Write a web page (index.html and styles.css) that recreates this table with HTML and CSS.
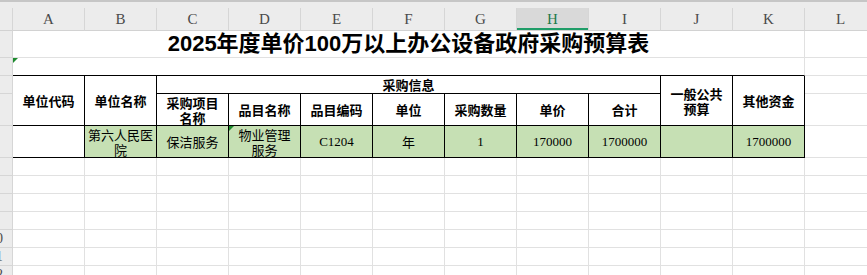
FILE: index.html
```html
<!DOCTYPE html>
<html lang="zh-CN">
<head>
    <meta charset="UTF-8">
    <meta name="viewport" content="width=device-width, initial-scale=1.0">
    <title>2025年度单价100万以上办公设备政府采购预算表</title>
    <link rel="stylesheet" href="styles.css">
</head>
<body>
    <!-- strip above the column letters -->
    <div class="top-strip"></div>

    <table class="sheet">
        <colgroup>
            <col class="col-rh">
            <col class="col"><col class="col"><col class="col"><col class="col">
            <col class="col"><col class="col"><col class="col"><col class="col">
            <col class="col"><col class="col"><col class="col"><col class="col">
        </colgroup>
        <thead>
            <tr class="col-head">
                <th class="corner"></th>
                <th>A</th><th>B</th><th>C</th><th>D</th><th>E</th><th>F</th>
                <th>G</th><th class="sel">H</th><th>I</th><th>J</th><th>K</th><th>L</th>
            </tr>
        </thead>
        <tbody>
            <tr class="r-title">
                <th class="rh"><span>1</span></th>
                <td colspan="11" class="title">2025年度单价100万以上办公设备政府采购预算表</td>
                <td></td>
            </tr>
            <tr class="r-sm">
                <th class="rh"><span>2</span></th>
                <td colspan="11" class="blank-top flagged"><i class="flag"></i></td>
                <td></td>
            </tr>
            <tr class="r-sm">
                <th class="rh"><span>3</span></th>
                <td rowspan="2" class="box hd">单位代码</td>
                <td rowspan="2" class="box hd">单位名称</td>
                <td colspan="7" class="box hd">采购信息</td>
                <td rowspan="2" class="box hd two">一般公共<br>预算</td>
                <td rowspan="2" class="box hd">其他资金</td>
                <td></td>
            </tr>
            <tr class="r-lg">
                <th class="rh"><span>4</span></th>
                <td class="box hd two">采购项目<br>名称</td>
                <td class="box hd">品目名称</td>
                <td class="box hd">品目编码</td>
                <td class="box hd">单位</td>
                <td class="box hd">采购数量</td>
                <td class="box hd">单价</td>
                <td class="box hd">合计</td>
                <td></td>
            </tr>
            <tr class="r-lg">
                <th class="rh"><span>5</span></th>
                <td class="box"></td>
                <td class="box fill two">第六人民医<br>院</td>
                <td class="box fill">保洁服务</td>
                <td class="box fill two flagged"><i class="flag"></i>物业管理<br>服务</td>
                <td class="box fill num">C1204</td>
                <td class="box fill">年</td>
                <td class="box fill num">1</td>
                <td class="box fill num">170000</td>
                <td class="box fill num">1700000</td>
                <td class="box fill"></td>
                <td class="box fill num">1700000</td>
                <td></td>
            </tr>
            <tr class="r-sm"><th class="rh"><span>6</span></th><td></td><td></td><td></td><td></td><td></td><td></td><td></td><td></td><td></td><td></td><td></td><td></td></tr>
            <tr class="r-sm"><th class="rh"><span>7</span></th><td></td><td></td><td></td><td></td><td></td><td></td><td></td><td></td><td></td><td></td><td></td><td></td></tr>
            <tr class="r-sm"><th class="rh"><span>8</span></th><td></td><td></td><td></td><td></td><td></td><td></td><td></td><td></td><td></td><td></td><td></td><td></td></tr>
            <tr class="r-sm"><th class="rh"><span>9</span></th><td></td><td></td><td></td><td></td><td></td><td></td><td></td><td></td><td></td><td></td><td></td><td></td></tr>
            <tr class="r-sm"><th class="rh"><span>10</span></th><td></td><td></td><td></td><td></td><td></td><td></td><td></td><td></td><td></td><td></td><td></td><td></td></tr>
            <tr class="r-sm"><th class="rh"><span>11</span></th><td></td><td></td><td></td><td></td><td></td><td></td><td></td><td></td><td></td><td></td><td></td><td></td></tr>
            <tr class="r-sm"><th class="rh"><span>12</span></th><td></td><td></td><td></td><td></td><td></td><td></td><td></td><td></td><td></td><td></td><td></td><td></td></tr>
        </tbody>
    </table>
</body>
</html>
```

FILE: styles.css
```css
/* Page */
body {
    margin: 0;
    background: #fff;
    color: #000;
    font-family: "Noto Sans CJK SC", "Noto Sans", sans-serif;
    overflow: hidden;
}

/* Grey band above the column letters */
.top-strip {
    height: 6px;
    background: #ececec;
    border-top: 2px solid #c6c6c6;
}

/* Sheet grid: every cell draws its own right and bottom line */
.sheet {
    border-collapse: separate;
    border-spacing: 0;
    table-layout: fixed;
    width: 877px;
}

.col-rh { width: 13px; }
.col { width: 72px; }

.sheet td,
.sheet th {
    padding: 0;
    border-right: 1px solid #e1e1e1;
    border-bottom: 1px solid #e1e1e1;
    box-sizing: border-box;
    overflow: hidden;
    white-space: nowrap;
    text-align: center;
    vertical-align: middle;
}

/* Column letters */
.col-head th {
    height: 23px;
    background: #ececec;
    border-right-color: #d6d6d6;
    border-bottom-color: #d2d2d2;
    font-family: "Liberation Serif", serif;
    font-weight: normal;
    font-size: 15px;
    color: #4a4a4a;
}

.col-head th.sel {
    background: #d9d9d9;
    color: #1c7a4c;
    box-shadow: inset 0 -2px 0 #1f9d68;
}

/* Row numbers, mostly scrolled out of view */
.rh {
    background: #ececec;
    border-right-color: #d6d6d6 !important;
    border-bottom-color: #d6d6d6 !important;
    font-family: "Liberation Serif", serif;
    font-weight: normal;
    font-size: 14px;
    color: #4a4a4a;
}

.rh span {
    display: block;
    width: 32px;
    margin-left: -20px;
    text-align: center;
}

/* Row heights */
.r-title { height: 27px; }
.r-sm { height: 18px; }
.r-lg { height: 32px; }

/* Title row */
.title {
    font-family: "Liberation Sans", "Noto Sans CJK SC", sans-serif;
    font-weight: bold;
    font-size: 22px;
    line-height: 26px;
}

.blank-top {
    border-bottom-color: #000 !important;
}

/* Bordered block */
.sheet td.box {
    border-right-color: #000;
    border-bottom-color: #000;
    font-size: 13px;
    line-height: 15px;
}

.hd {
    font-weight: bold;
}

.two {
    white-space: normal;
}

.fill {
    background: #c6e0b4;
}

.num {
    font-family: "Liberation Serif", serif;
}

/* Small green corner marker */
.flagged {
    position: relative;
}

.flag {
    position: absolute;
    top: 0;
    left: 0;
    width: 0;
    height: 0;
    border-top: 5px solid #1d8a2e;
    border-right: 5px solid transparent;
}
```
